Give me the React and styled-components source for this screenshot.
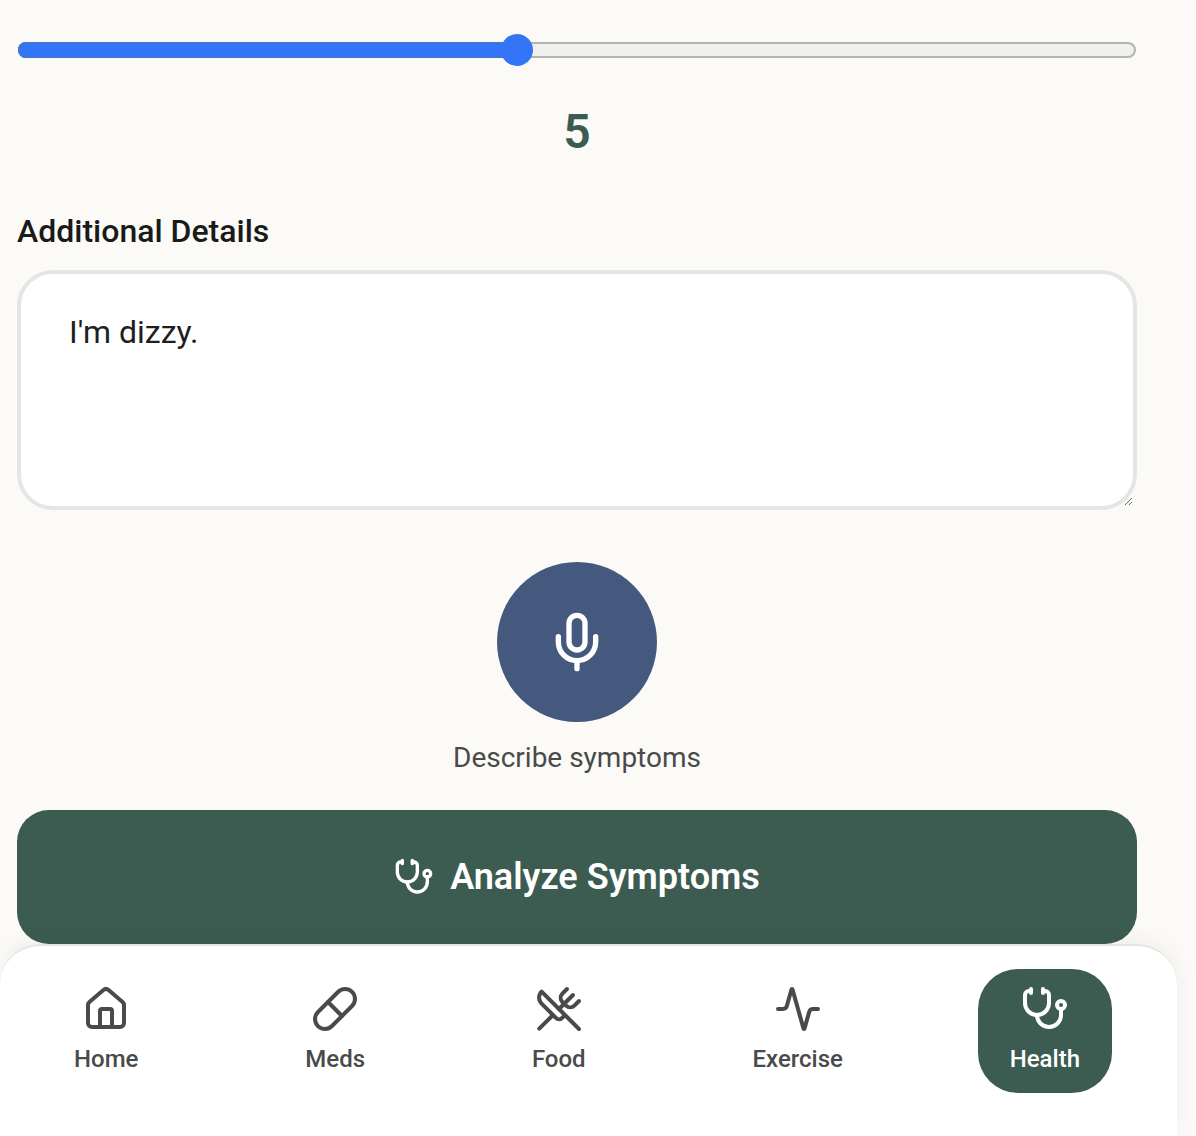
import React from "react";
import styled, { createGlobalStyle } from "styled-components";
import { House, Pill, UtensilsCrossed, Activity, Stethoscope, Mic } from "lucide-react";

const Global = createGlobalStyle`
  html, body { margin: 0; padding: 0; background: #fbfaf6; height: 1136px; overflow: hidden; }
  * { box-sizing: border-box; }
  body { font-family: Roboto, "Noto Sans", sans-serif; }
`;

const Shell = styled.div`
  width: 1177px;
  height: 1136px;
  display: flex;
  flex-direction: column;
`;
const Main = styled.main`
  flex: 1;
  padding: 42px 40px 0 17px;
  display: flex;
  flex-direction: column;
`;
const SliderTrack = styled.div`
  position: relative;
  height: 16px;
  margin-left: 1px;
  margin-right: 1px;
  border: 2px solid #b4b3b0;
  border-radius: 8px;
  background: #efefef;
`;
const SliderFill = styled.div`
  position: absolute;
  left: -2px;
  top: -2px;
  bottom: -2px;
  border-radius: 8px;
  background: #3375f6;
  box-shadow: inset 0 0 0 1px #4a76bd;
`;
const SliderThumb = styled.div`
  position: absolute;
  top: -10px;
  width: 32px;
  height: 32px;
  margin-left: -16px;
  border-radius: 50%;
  background: #3375f6;
`;
const Value = styled.div`
  margin-top: 46px;
  height: 56px;
  line-height: 56px;
  text-align: center;
  font-size: 48px;
  font-weight: 600;
  color: #3c5c51;
`;
const Label = styled.label`
  display: block;
  margin-top: 49px;
  height: 44px;
  line-height: 44px;
  font-size: 32px;
  font-weight: 500;
  color: #1a1a1a;
`;
const Area = styled.textarea`
  display: block;
  margin-top: 17px;
  width: 100%;
  height: 240px;
  padding: 40px 48px;
  border: 4px solid #e5e5e3;
  border-radius: 36px;
  background: #fff;
  color: #1f1f1f;
  font-family: inherit;
  font-size: 32px;
  line-height: 36px;
  outline: none;
`;
const Voice = styled.div`
  margin-top: 52px;
  display: flex;
  flex-direction: column;
  align-items: center;
`;
const MicButton = styled.button`
  width: 160px;
  height: 160px;
  border: 0;
  padding: 0;
  border-radius: 50%;
  background: #44597d;
  color: #fff;
  display: flex;
  align-items: center;
  justify-content: center;
`;
const Caption = styled.div`
  margin-top: 16px;
  height: 40px;
  line-height: 40px;
  font-size: 28px;
  color: #4a4a4a;
`;
const Analyze = styled.button`
  margin-top: 32px;
  width: 100%;
  height: 134px;
  border: 0;
  border-radius: 32px;
  background: #3c5c51;
  color: #fff;
  font-family: inherit;
  font-size: 36px;
  font-weight: 600;
  display: flex;
  align-items: center;
  justify-content: center;
  gap: 16px;
`;
const Nav = styled.nav`
  height: 193px;
  padding: 23px 65px 0 42px;
  border-top: 2px solid #e5e5e3;
  border-radius: 40px 40px 0 0;
  background: #fff;
  box-shadow: 0 -4px 24px rgba(0, 0, 0, 0.05);
  display: flex;
  justify-content: space-between;
  align-items: flex-start;
`;
const NavItem = styled.a`
  height: 124px;
  padding: 16px 32px;
  border-radius: 40px;
  display: flex;
  flex-direction: column;
  align-items: center;
  gap: 8px;
  background: ${(p) => (p.$active ? "#3c5c51" : "transparent")};
  color: ${(p) => (p.$active ? "#fff" : "#4a4a4a")};
`;
const NavText = styled.span`
  height: 36px;
  line-height: 36px;
  font-size: 24px;
  font-weight: 500;
`;

const items = [
  { label: "Home", Icon: House },
  { label: "Meds", Icon: Pill },
  { label: "Food", Icon: UtensilsCrossed },
  { label: "Exercise", Icon: Activity },
  { label: "Health", Icon: Stethoscope, active: true },
];

export default function App() {
  return (
    <>
      <Global />
      <Shell>
        <Main>
          <SliderTrack>
            <SliderFill style={{ width: "44.8%" }} />
            <SliderThumb style={{ left: "44.6%" }} />
          </SliderTrack>
          <Value>5</Value>
          <Label>Additional Details</Label>
          <Area defaultValue="I'm dizzy." />
          <Voice>
            <MicButton aria-label="Record">
              <Mic size={64} />
            </MicButton>
            <Caption>Describe symptoms</Caption>
          </Voice>
          <Analyze>
            <Stethoscope size={40} />
            Analyze Symptoms
          </Analyze>
        </Main>
        <Nav>
          {items.map(({ label, Icon, active }) => (
            <NavItem key={label} $active={active}>
              <Icon size={48} />
              <NavText>{label}</NavText>
            </NavItem>
          ))}
        </Nav>
      </Shell>
    </>
  );
}
